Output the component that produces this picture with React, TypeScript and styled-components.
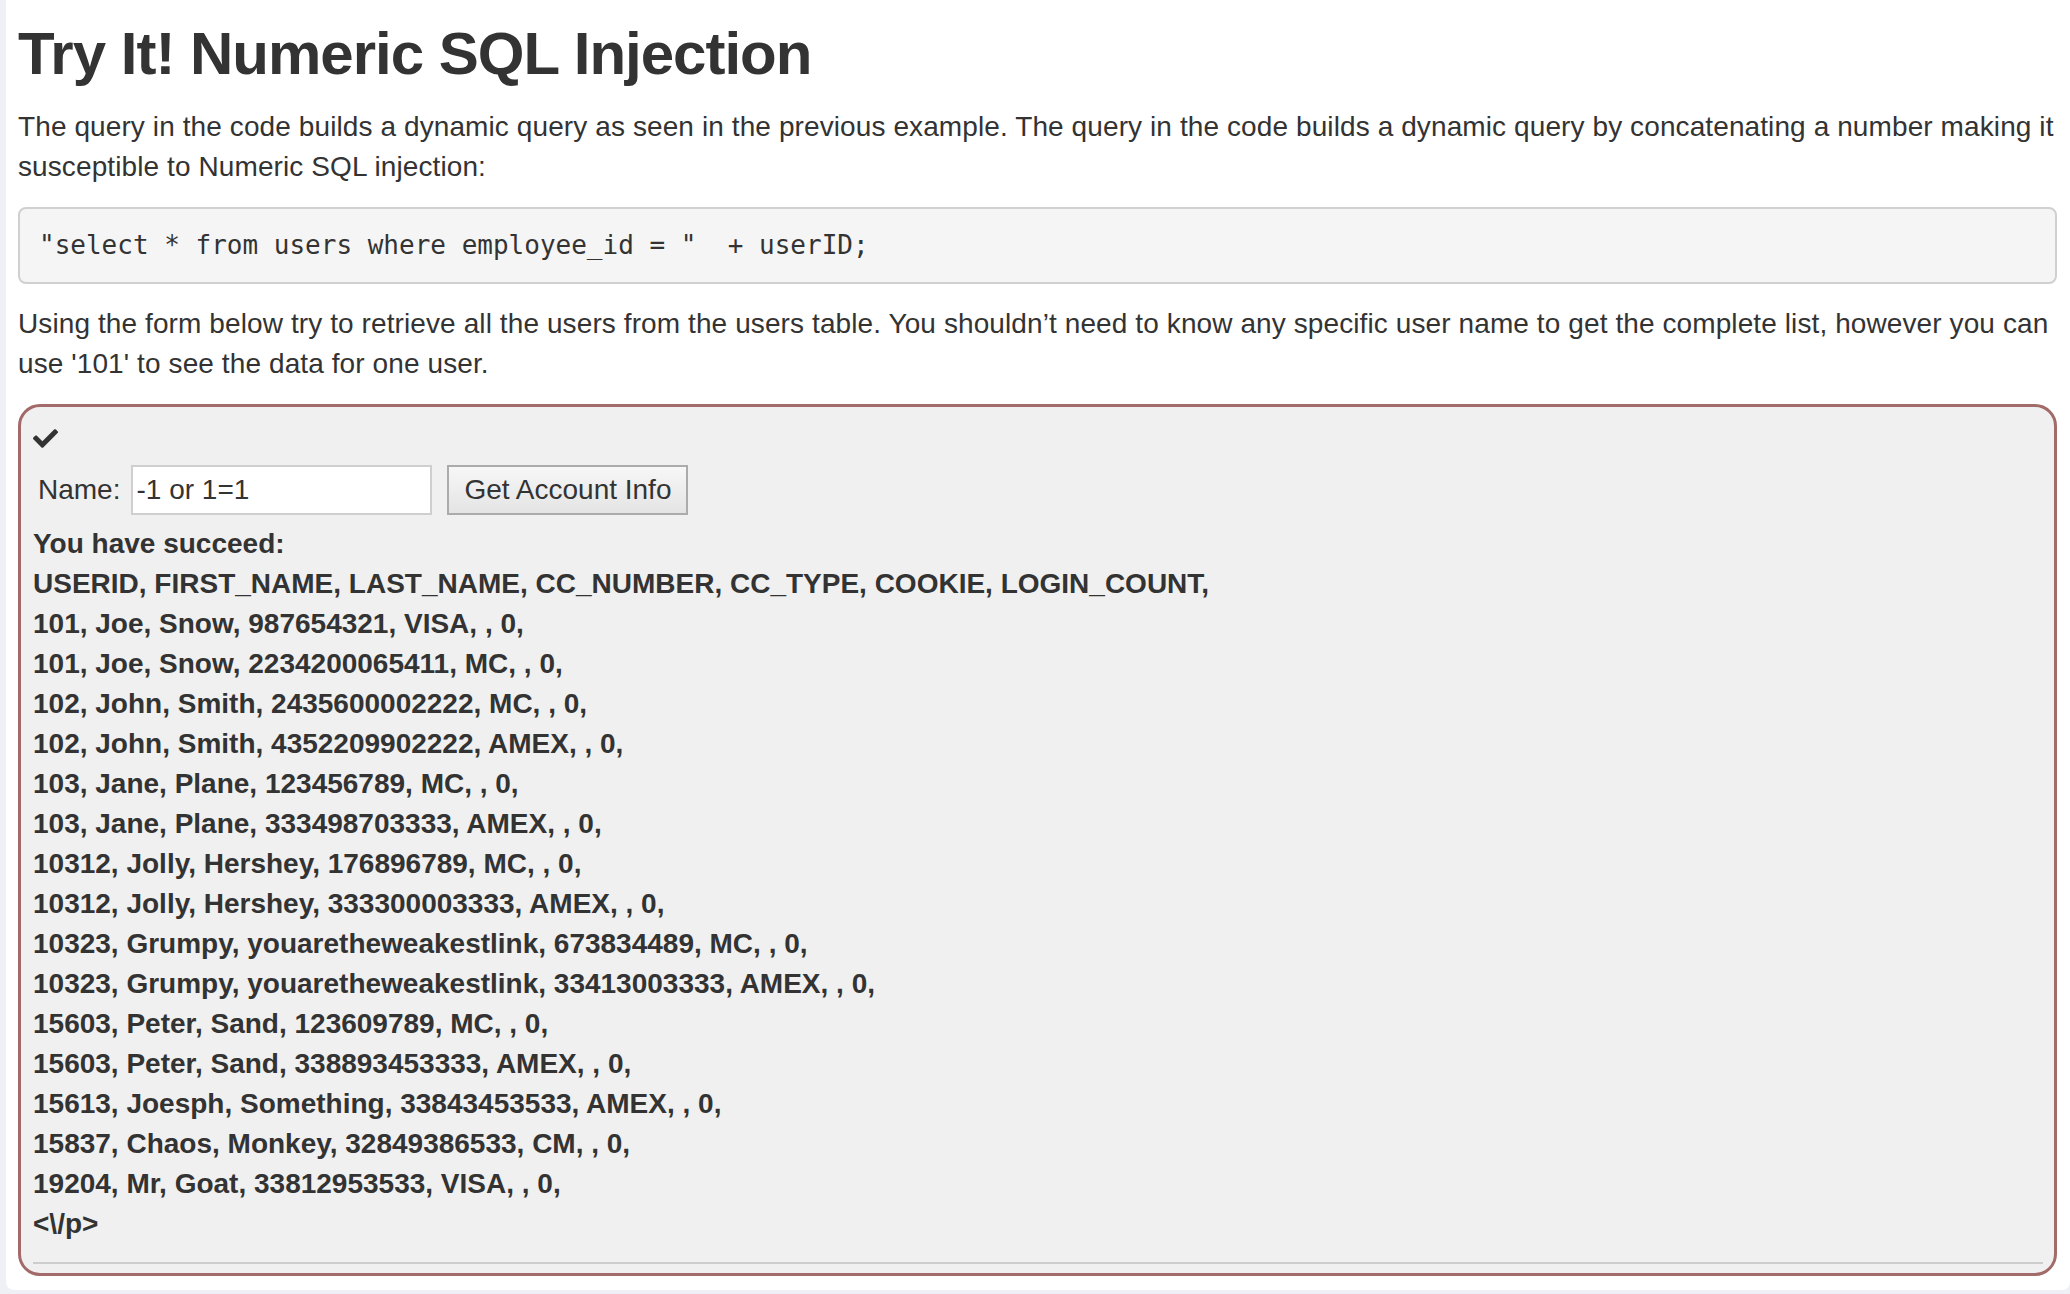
import styled, { createGlobalStyle } from "styled-components";

const rows = [
  "101, Joe, Snow, 987654321, VISA, , 0,",
  "101, Joe, Snow, 2234200065411, MC, , 0,",
  "102, John, Smith, 2435600002222, MC, , 0,",
  "102, John, Smith, 4352209902222, AMEX, , 0,",
  "103, Jane, Plane, 123456789, MC, , 0,",
  "103, Jane, Plane, 333498703333, AMEX, , 0,",
  "10312, Jolly, Hershey, 176896789, MC, , 0,",
  "10312, Jolly, Hershey, 333300003333, AMEX, , 0,",
  "10323, Grumpy, youaretheweakestlink, 673834489, MC, , 0,",
  "10323, Grumpy, youaretheweakestlink, 33413003333, AMEX, , 0,",
  "15603, Peter, Sand, 123609789, MC, , 0,",
  "15603, Peter, Sand, 338893453333, AMEX, , 0,",
  "15613, Joesph, Something, 33843453533, AMEX, , 0,",
  "15837, Chaos, Monkey, 32849386533, CM, , 0,",
  "19204, Mr, Goat, 33812953533, VISA, , 0,",
];

export default function App() {
  return (
    <>
      <GlobalStyle />
      <Page>
        <Card>
          <Title>Try It! Numeric SQL Injection</Title>
          <Para>
            The query in the code builds a dynamic query as seen in the previous example. The query in the code
            builds a dynamic query by concatenating a number making it susceptible to Numeric SQL injection:
          </Para>
          <CodeBlock>"select * from users where employee_id = "  + userID;</CodeBlock>
          <Para>
            Using the form below try to retrieve all the users from the users table. You shouldn’t need to know any
            specific user name to get the complete list, however you can use '101' to see the data for one user.
          </Para>

          <AttackBox>
            <CheckRow>
              <svg width="25" height="19" viewBox="0 64 512 384" fill="#333">
                <path d="M173.898 439.404l-166.4-166.4c-9.997-9.997-9.997-26.206 0-36.204l36.203-36.204c9.997-9.998 26.207-9.998 36.204 0L192 312.69 432.095 72.596c9.997-9.997 26.207-9.997 36.204 0l36.203 36.204c9.997 9.997 9.997 26.206 0 36.204l-294.4 294.401c-9.998 9.997-26.207 9.997-36.204-.001z" />
              </svg>
            </CheckRow>
            <FormRow>
              <Label>Name:</Label>
              <NameInput defaultValue="-1 or 1=1" />
              <SubmitButton>Get Account Info</SubmitButton>
            </FormRow>
            <Output>
              <Line>You have succeed:</Line>
              <Line>USERID, FIRST_NAME, LAST_NAME, CC_NUMBER, CC_TYPE, COOKIE, LOGIN_COUNT,</Line>
              {rows.map((r, i) => (
                <Line key={i}>{r}</Line>
              ))}
              <Line>{"<\\/p>"}</Line>
            </Output>
            <Divider />
          </AttackBox>
        </Card>
      </Page>
    </>
  );
}

const GlobalStyle = createGlobalStyle`
  html, body {
    margin: 0;
    background: #eef0f6;
  }
  body {
    font-family: "Liberation Sans", Helvetica, Arial, sans-serif;
    color: #333;
  }
`;

const Page = styled.div`
  padding: 0 0 4px 6px;
`;

const Card = styled.div`
  background: #fff;
  border-radius: 0 0 8px 8px;
  padding: 21px 13px 14px 12px;
`;

const Title = styled.h2`
  margin: 0 0 20px;
  font-size: 60px;
  line-height: 66px;
  font-weight: bold;
  letter-spacing: -1px;
  color: #333;
`;

const Para = styled.p`
  margin: 0 0 20px;
  font-size: 28px;
  line-height: 40px;
  letter-spacing: 0.1px;
`;

const CodeBlock = styled.pre`
  margin: 0 0 20px;
  padding: 18px 19px;
  background: #f5f5f5;
  border: 2px solid #d0d0d0;
  border-radius: 8px;
  font-family: "DejaVu Sans Mono", "Liberation Mono", monospace;
  font-size: 26px;
  line-height: 37px;
  color: #333;
  white-space: pre;
`;

const AttackBox = styled.div`
  background: #f0f0f0;
  border: 3px solid #a26a69;
  border-radius: 22px;
  padding: 11px 11px 9px 12px;
`;

const CheckRow = styled.div`
  height: 40px;
  display: flex;
  align-items: center;
`;

const FormRow = styled.div`
  display: flex;
  align-items: center;
  margin-top: 6px;
  height: 51px;
`;

const Label = styled.label`
  font-size: 28px;
  margin: 0 11px 0 5px;
`;

const NameInput = styled.input`
  box-sizing: border-box;
  width: 301px;
  height: 50px;
  border: 2px solid #cfcfcf;
  background: #fff;
  padding: 0 3px;
  font-family: "Liberation Sans", Helvetica, Arial, sans-serif;
  font-size: 28px;
  color: #333;
  outline: none;
`;

const SubmitButton = styled.button`
  box-sizing: border-box;
  margin-left: 15px;
  width: 241px;
  height: 50px;
  border: 2px solid #ababab;
  background: linear-gradient(#f7f7f7, #e4e4e4);
  font-family: "Liberation Sans", Helvetica, Arial, sans-serif;
  font-size: 28px;
  color: #333;
  padding: 0;
`;

const Output = styled.div`
  margin-top: 9px;
  font-weight: bold;
  font-size: 28px;
  line-height: 40px;
`;

const Line = styled.div``;

const Divider = styled.hr`
  margin: 18px 0 0;
  border: 0;
  border-top: 2px solid #cdcdcd;
`;
